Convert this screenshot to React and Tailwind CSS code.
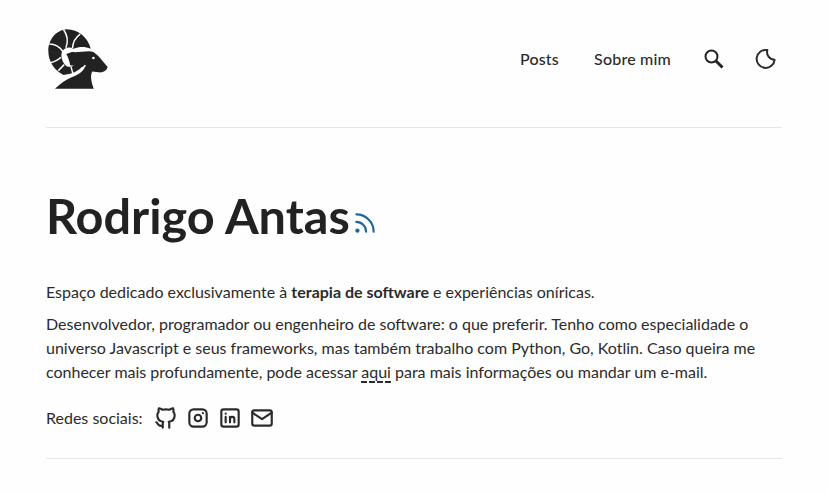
function Logo() {
  return (
    <svg viewBox="50 35 190 195" className="w-[63px] h-[65px] ml-px mt-[2px]" fill="#222">
      {/* horn */}
      <path d="M182 100C174 66 144 41 110 41C76 43 54 74 54 106C54 138 72 166 100 179C122 178 146 168 160 150L150 140C138 150 124 156 112 154C98 146 90 126 95 110C100 98 116 92 130 100C150 92 166 94 182 100Z" />
      {/* head */}
      <path d="M108 116L125 110C150 112 176 104 190 110C205 120 220 140 233 155C229 168 218 173 205 171L187 169C181 176 181 195 191 221L74 221C90 205 106 194 124 186C142 180 158 170 164 156L120 150C118 138 114 126 108 116Z" />
      <g fill="none" stroke="#fefefe" strokeWidth="4.5">
        <path d="M57 86C72 86 88 94 97 108" />
        <path d="M100 42C112 60 114 80 107 97" />
        <path d="M150 56C136 66 128 82 127 98" />
        <path d="M60 142C72 140 84 134 92 126" />
        <path d="M84 166L102 148" />
        <path d="M122 154L128 174" />
        <path d="M100 182C124 182 148 172 166 150" />
        <path d="M104 108C98 118 102 134 112 148" />
      </g>
      <circle cx="190" cy="128" r="4" fill="#fefefe" />
    </svg>
  );
}

function Icon({ className, children }) {
  return (
    <svg viewBox="0 0 24 24" fill="none" stroke="currentColor" strokeWidth="2" strokeLinecap="round" strokeLinejoin="round" className={className}>
      {children}
    </svg>
  );
}

export default function App() {
  return (
    <div className="min-h-screen bg-[#fefefe] text-[#2b2b2b] text-base font-['Lato',sans-serif]">
      <div className="mx-[46px] overflow-hidden">
        {/* Header */}
        <header className="h-[128px] border-b border-[#e5e5e5] flex items-center justify-between pb-[10px]">
          <Logo />
          <nav className="flex items-center mr-[3px] font-medium tracking-[0.2px]">
            <a className="mr-[35px]">Posts</a>
            <a className="mr-[33px]">Sobre mim</a>
            <svg viewBox="0 0 20 20" fill="none" stroke="#222" className="w-5 h-5 mr-[31px]">
              <circle cx="7.5" cy="7.5" r="6" strokeWidth="2" />
              <path d="M12 12L18.5 18.5" strokeWidth="3" />
            </svg>
            <Icon className="w-6 h-6">
              <path d="M12 3c.132 0 .263 0 .393 0a7.5 7.5 0 0 0 7.225 9.652a9 9 0 1 1 -7.618 -9.652z" />
            </Icon>
          </nav>
        </header>

        {/* Title */}
        <div className="flex items-end mt-[55px] gap-[2px]">
          <h1 className="text-[48.6px] leading-[64px] font-bold text-[#222]">Rodrigo Antas</h1>
          <Icon className="w-[26px] h-[26px] text-[#1c6a9a] mb-[11px]">
            <circle cx="5" cy="19" r="1" />
            <path d="M4 4a16 16 0 0 1 16 16" />
            <path d="M4 11a9 9 0 0 1 9 9" />
          </Icon>
        </div>

        {/* Intro */}
        <p className="mt-[33px] leading-6">
          Espaço dedicado exclusivamente à <strong className="font-bold">terapia de software</strong> e experiências oníricas.
        </p>
        <p className="mt-2 leading-6">
          Desenvolvedor, programador ou engenheiro de software: o que preferir. Tenho como especialidade o universo Javascript e seus frameworks, mas também trabalho com Python, Go, Kotlin. Caso queira me conhecer mais profundamente, pode acessar <a className="border-b-2 border-dashed border-[#2b2b2b]">aqui</a> para mais informações ou mandar um e-mail.
        </p>

        {/* Social */}
        <div className="flex items-center mt-[21px] pb-[27px] border-b border-[#e5e5e5]">
          <span className="mr-[10px]">Redes sociais:</span>
          <div className="flex gap-[6px]">
            <Icon className="w-[26px] h-[26px]">
              <path d="M9 19c-4.3 1.4 -4.3 -2.5 -6 -3m12 5v-3.5c0 -1 .1 -1.4 -.5 -2c2.8 -.3 5.5 -1.4 5.5 -6a4.6 4.6 0 0 0 -1.3 -3.2a4.2 4.2 0 0 0 -.1 -3.2s-1.1 -.3 -3.5 1.3a12.3 12.3 0 0 0 -6.2 0c-2.4 -1.6 -3.5 -1.3 -3.5 -1.3a4.2 4.2 0 0 0 -.1 3.2a4.6 4.6 0 0 0 -1.3 3.2c0 4.6 2.7 5.7 5.5 6c-.6 .6 -.6 1.2 -.5 2v3.5" />
            </Icon>
            <Icon className="w-[26px] h-[26px]">
              <rect x="4" y="4" width="16" height="16" rx="4" />
              <circle cx="12" cy="12" r="3" />
              <path d="M16.5 7.5v.01" />
            </Icon>
            <Icon className="w-[26px] h-[26px]">
              <rect x="4" y="4" width="16" height="16" rx="2" />
              <path d="M8 11v5" />
              <path d="M8 8v.01" />
              <path d="M12 16v-5" />
              <path d="M16 16v-3a2 2 0 0 0 -4 0" />
            </Icon>
            <Icon className="w-[26px] h-[26px]">
              <rect x="3" y="5" width="18" height="14" rx="2" />
              <path d="M3 7l9 6l9 -6" />
            </Icon>
          </div>
        </div>
      </div>
    </div>
  );
}
